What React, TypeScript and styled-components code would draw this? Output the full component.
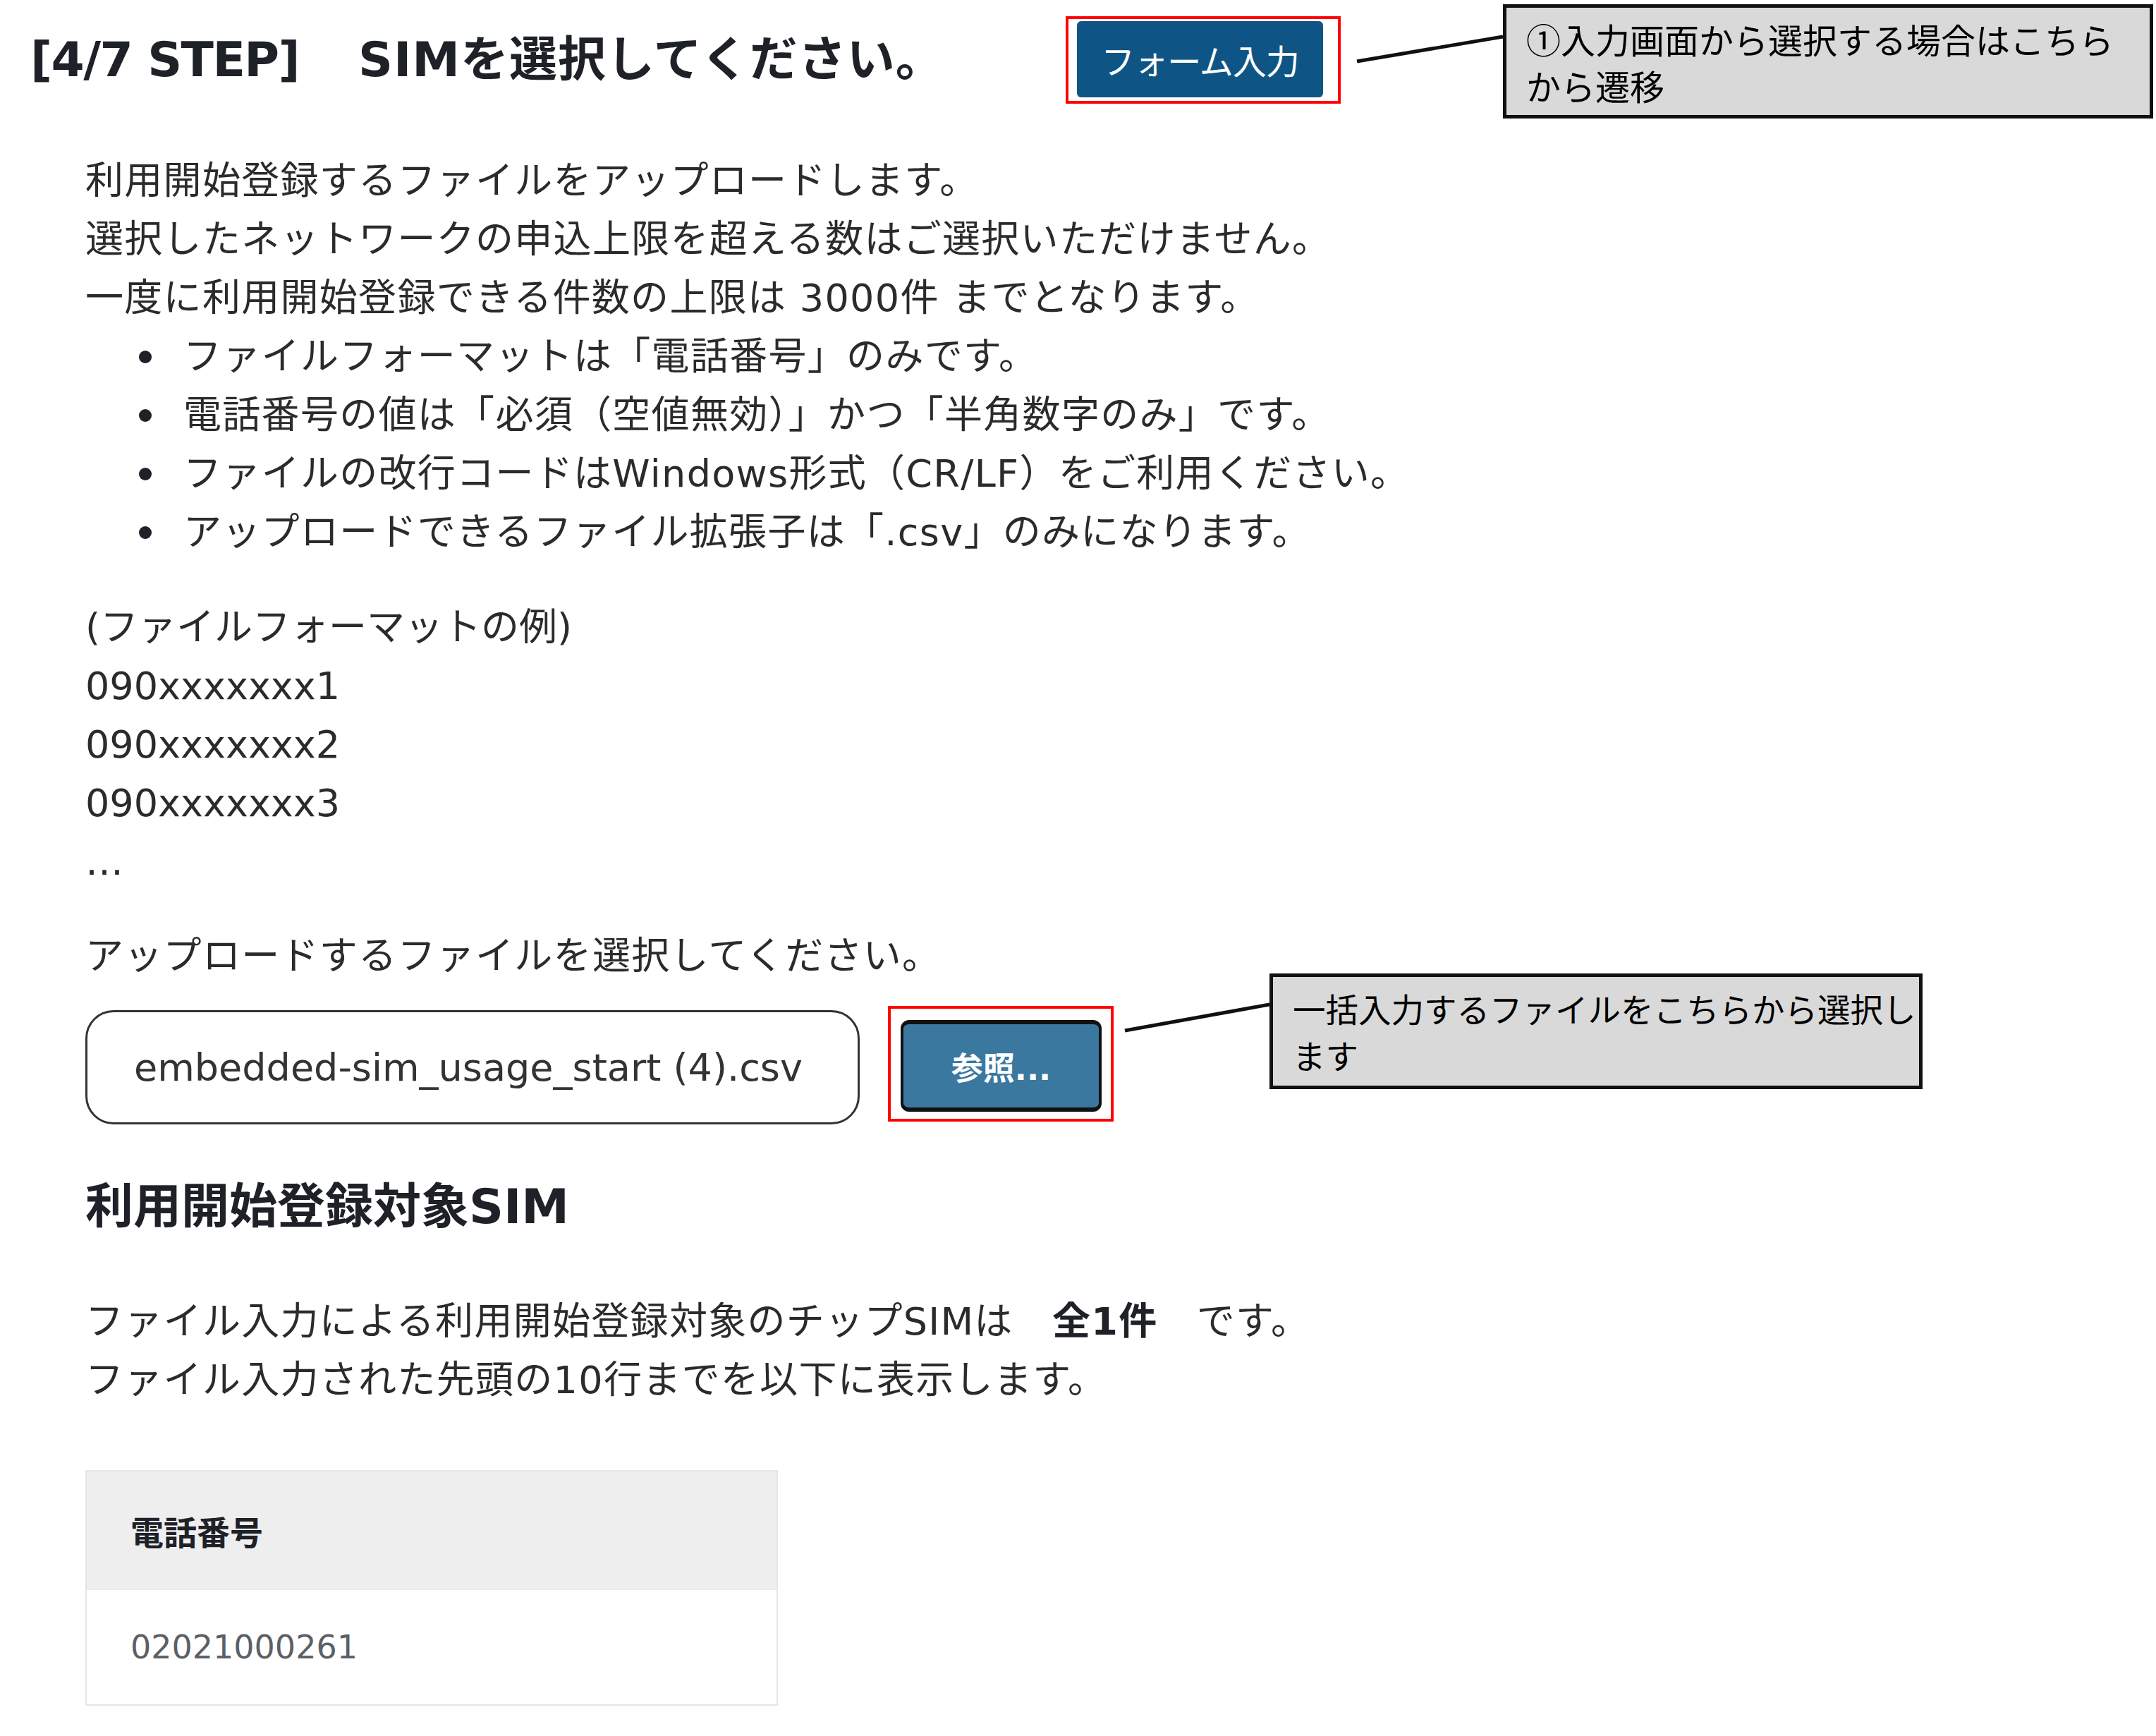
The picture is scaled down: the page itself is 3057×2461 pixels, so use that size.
import React from "react";
import styled, { createGlobalStyle } from "styled-components";

const GlobalStyle = createGlobalStyle`
  html, body {
    margin: 0;
    padding: 0;
    background: #ffffff;
  }
  body {
    font-family: "DejaVu Sans", "Noto Sans CJK JP", sans-serif;
    color: #2b2b2b;
  }
`;

const bullets = [
  "ファイルフォーマットは「電話番号」のみです。",
  "電話番号の値は「必須（空値無効）」かつ「半角数字のみ」です。",
  "ファイルの改行コードはWindows形式（CR/LF）をご利用ください。",
  "アップロードできるファイル拡張子は「.csv」のみになります。",
];

const examples = ["(ファイルフォーマットの例)", "090xxxxxxx1", "090xxxxxxx2", "090xxxxxxx3", "…"];

const App = () => {
  return (
    <Page>
      <GlobalStyle />
      <Header>
        <Title>
          <StepLabel>[4/7 STEP]</StepLabel>　<TitleText>SIMを選択してください。</TitleText>
        </Title>
        <RedFrame $pad="3px 21px 5px 12px">
          <FormButton type="button">フォーム入力</FormButton>
        </RedFrame>
      </Header>

      <Content>
        <Paragraph>
          利用開始登録するファイルをアップロードします。
          <br />
          選択したネットワークの申込上限を超える数はご選択いただけません。
          <br />
          一度に利用開始登録できる件数の上限は 3000件 までとなります。
        </Paragraph>
        <BulletList>
          {bullets.map((b) => (
            <BulletItem key={b}>
              <Dot />
              <span>{b}</span>
            </BulletItem>
          ))}
        </BulletList>

        <Paragraph $top={52} $tight>
          {examples.map((e, i) => (
            <React.Fragment key={e}>
              {i > 0 && <br />}
              {e}
            </React.Fragment>
          ))}
        </Paragraph>

        <Paragraph $top={51}>アップロードするファイルを選択してください。</Paragraph>

        <UploadRow>
          <FileBox>embedded-sim_usage_start (4).csv</FileBox>
          <RedFrame $pad="16px 13px 10px 14px">
            <BrowseButton type="button">参照...</BrowseButton>
          </RedFrame>
        </UploadRow>

        <SectionHeading>利用開始登録対象SIM</SectionHeading>

        <Paragraph $top={70}>
          ファイル入力による利用開始登録対象のチップSIMは　<strong>全1件</strong>　です。
          <br />
          ファイル入力された先頭の10行までを以下に表示します。
        </Paragraph>

        <Table>
          <thead>
            <tr>
              <HeadCell>電話番号</HeadCell>
            </tr>
          </thead>
          <tbody>
            <tr>
              <BodyCell>02021000261</BodyCell>
            </tr>
          </tbody>
        </Table>
      </Content>

      <Connectors width="3057" height="2461" viewBox="0 0 3057 2461">
        <line x1="1924" y1="87" x2="2131" y2="52" stroke="#111" strokeWidth="5" />
        <line x1="1595" y1="1461" x2="1800" y2="1424" stroke="#111" strokeWidth="5" />
      </Connectors>

      <Callout $left={2131} $top={6} $width={922} $height={162} $size={49}>
        ①入力画面から選択する場合はこちら
        <br />
        から遷移
      </Callout>
      <Callout $left={1800} $top={1380} $width={926} $height={164} $size={46.5}>
        一括入力するファイルをこちらから選択し
        <br />
        ます
      </Callout>
    </Page>
  );
};

export default App;

const Page = styled.div`
  position: relative;
  width: 3057px;
  min-height: 2461px;
  box-sizing: border-box;
  padding-bottom: 40px;
`;

const Header = styled.div`
  display: flex;
  align-items: center;
  padding: 23px 0 0 43px;
`;

const Title = styled.h1`
  margin: 0;
  width: 1468px;
  font-size: 68px;
  font-weight: 700;
  line-height: 1.36;
  color: #1e2127;
  white-space: nowrap;
`;

const StepLabel = styled.span`
  letter-spacing: -1.6px;
  padding-right: 16px;
`;

const TitleText = styled.span`
  letter-spacing: 1px;
`;

const RedFrame = styled.div<{ $pad: string }>`
  display: flex;
  border: 4px solid #ff0000;
  padding: ${({ $pad }) => $pad};
`;

const FormButton = styled.button`
  width: 349px;
  height: 108px;
  border: none;
  border-radius: 6px;
  background: #0e5585;
  color: #ffffff;
  font-family: "Noto Sans CJK JP", sans-serif;
  font-size: 48px;
  letter-spacing: -1px;
  padding: 0;
  cursor: pointer;
`;

const Content = styled.div`
  padding: 68px 0 0 121px;
`;

const Paragraph = styled.p<{ $top?: number; $tight?: boolean }>`
  margin: ${({ $top }) => $top ?? 0}px 0 0;
  font-size: 54px;
  line-height: 83px;
  letter-spacing: ${({ $tight }) => ($tight ? "0" : "1.3px")};
  white-space: nowrap;
  strong {
    font-weight: 700;
    color: #1e2127;
  }
`;

const BulletList = styled.ul`
  list-style: none;
  margin: 0;
  padding: 0;
`;

const BulletItem = styled.li`
  display: flex;
  align-items: center;
  font-size: 54px;
  line-height: 83px;
  letter-spacing: 1.3px;
  white-space: nowrap;
`;

const Dot = styled.span`
  flex: 0 0 auto;
  width: 18px;
  height: 18px;
  border-radius: 50%;
  background: #1e2127;
  margin: 0 45px 0 76px;
`;

const UploadRow = styled.div`
  display: flex;
  align-items: flex-start;
  gap: 40px;
  margin-top: 29px;
`;

const FileBox = styled.div`
  box-sizing: border-box;
  width: 1098px;
  height: 162px;
  margin-top: 6px;
  display: flex;
  align-items: center;
  padding-left: 66px;
  border: 3px solid #333333;
  border-radius: 40px;
  font-size: 54px;
  color: #333333;
`;

const BrowseButton = styled.button`
  box-sizing: border-box;
  width: 285px;
  height: 130px;
  border: 5px solid #111111;
  border-width: 6px 4px 6px 4px;
  border-radius: 12px;
  background: #3b78a0;
  color: #ffffff;
  font-family: "DejaVu Sans", "Noto Sans CJK JP", sans-serif;
  font-size: 45px;
  font-weight: 700;
  padding: 0;
  cursor: pointer;
`;

const SectionHeading = styled.h2`
  margin: 66px 0 0;
  font-size: 68px;
  font-weight: 700;
  line-height: 102px;
  color: #1e2127;
`;

const Table = styled.table`
  margin-top: 86px;
  width: 982px;
  border-collapse: collapse;
  border: 2px solid #e2e7ee;
`;

const HeadCell = styled.th`
  height: 166px;
  padding: 0 0 0 62px;
  text-align: left;
  background: #eeeeee;
  font-size: 47px;
  font-weight: 700;
  color: #1e2127;
  border-bottom: 2px solid #e8ecf1;
`;

const BodyCell = styled.td`
  height: 162px;
  padding: 0 0 0 62px;
  font-size: 46px;
  color: #5c5f66;
`;

const Connectors = styled.svg`
  position: absolute;
  left: 0;
  top: 0;
  pointer-events: none;
`;

const Callout = styled.div<{
  $left: number;
  $top: number;
  $width: number;
  $height: number;
  $size: number;
}>`
  position: absolute;
  left: ${({ $left }) => $left}px;
  top: ${({ $top }) => $top}px;
  width: ${({ $width }) => $width}px;
  height: ${({ $height }) => $height}px;
  box-sizing: border-box;
  border: 5px solid #111111;
  background: #d9d9d9;
  padding: 11px 0 0 28px;
  font-family: "Noto Sans CJK JP", sans-serif;
  font-size: ${({ $size }) => $size}px;
  line-height: 66px;
  color: #000000;
  white-space: nowrap;
`;
